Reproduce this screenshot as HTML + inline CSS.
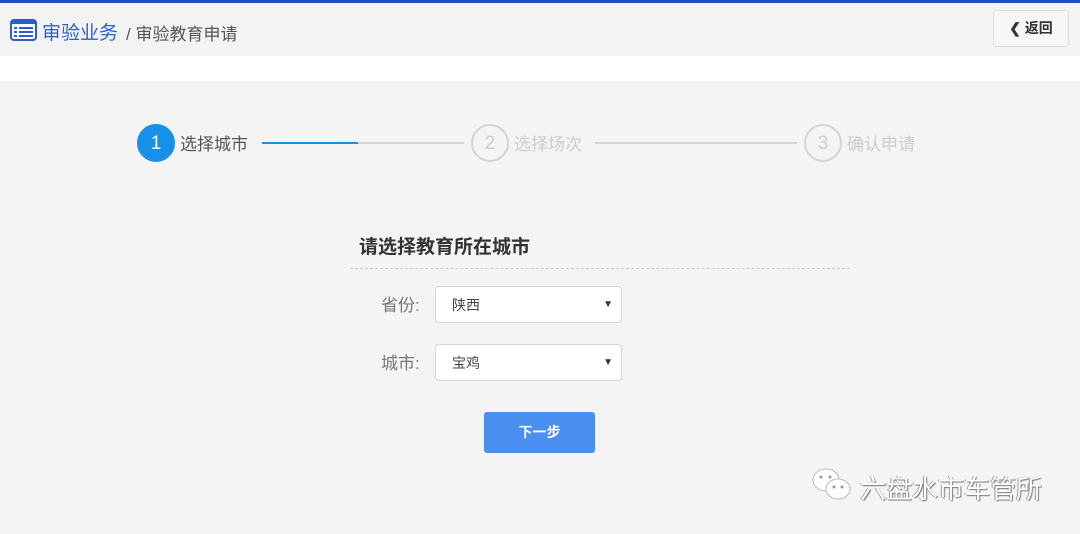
<!DOCTYPE html>
<html><head><meta charset="utf-8"><style>
*{margin:0;padding:0;box-sizing:border-box}
body{width:1080px;height:534px;overflow:hidden;background:#f4f4f4;font-family:"Liberation Sans","Noto Sans CJK SC",sans-serif;position:relative}
.top{position:absolute;left:0;top:0;width:1080px;height:3px;background:#1d4fc4}
.hdr{position:absolute;left:0;top:3px;width:1080px;height:53px;background:#f3f3f3}
.white{position:absolute;left:0;top:56px;width:1080px;height:25px;background:#fff}
.a{position:absolute;white-space:nowrap}
.back{position:absolute;left:993px;top:10px;width:76px;height:37px;border:1px solid #ddd;border-radius:3px;background:#f6f6f6;font-size:14px;color:#333;text-align:center;line-height:35px;font-weight:bold}
.circ{position:absolute;width:38px;height:38px;border-radius:50%;border:2px solid #d8d2d2;color:#ccc;font-size:19px;text-align:center;line-height:36px}
.line{position:absolute;height:2px;background:#d8d2d2;top:142px}
.sel{position:absolute;left:435px;width:187px;height:37px;border:1px solid #d6d6d6;border-radius:4px;background:#fff;font-size:14px;color:#444;padding-left:16px;line-height:37px}
.sel:after{content:"▼";position:absolute;right:8px;top:0;font-size:10px;color:#333;line-height:35px}
.lbl{position:absolute;font-size:17px;color:#777}
</style></head><body>
<div class="top"></div><div class="hdr"></div><div class="white"></div>
<svg class="a" style="left:10px;top:19px" width="27" height="22" viewBox="0 0 27 22"><rect x="1" y="1" width="25" height="20" rx="3" fill="#fff" stroke="#2a5bd0" stroke-width="2"/><rect x="1" y="1" width="25" height="4" fill="#2a5bd0"/><g fill="#2a5bd0"><rect x="4" y="8" width="3" height="2"/><rect x="9" y="8" width="14" height="2"/><rect x="4" y="12" width="3" height="2"/><rect x="9" y="12" width="14" height="2"/><rect x="4" y="16" width="3" height="2"/><rect x="9" y="16" width="14" height="2"/></g></svg>
<div class="a" style="left:42px;top:18px;font-size:19px;color:#2c5fd4">审验业务</div>
<div class="a" style="left:126px;top:20px;font-size:17px;color:#555">/ 审验教育申请</div>
<div class="back">❮ 返回</div>

<div class="circ" style="left:137px;top:124px;background:#1890e8;border-color:#1890e8;color:#fff">1</div>
<div class="a" style="left:180px;top:130px;font-size:17px;color:#555">选择城市</div>
<div class="line" style="left:262px;width:202px"></div>
<div class="line" style="left:262px;width:96px;background:#1890e8"></div>
<div class="circ" style="left:471px;top:124px">2</div>
<div class="a" style="left:514px;top:130px;font-size:17px;color:#ccc">选择场次</div>
<div class="line" style="left:595px;width:202px"></div>
<div class="circ" style="left:804px;top:124px">3</div>
<div class="a" style="left:847px;top:130px;font-size:17px;color:#ccc">确认申请</div>

<div class="a" style="left:359px;top:232px;font-size:19px;font-weight:bold;color:#333">请选择教育所在城市</div>
<div class="a" style="left:350px;top:268px;width:500px;border-top:1px dashed #ccc"></div>
<div class="lbl" style="left:381px;top:291px">省份:</div>
<div class="sel" style="top:286px">陕西</div>
<div class="lbl" style="left:381px;top:349px">城市:</div>
<div class="sel" style="top:344px">宝鸡</div>
<div class="a" style="left:484px;top:412px;width:111px;height:41px;background:#4a8ff0;border-radius:3px;color:#fff;font-size:14px;font-weight:bold;text-align:center;line-height:41px">下一步</div>

<svg class="a" style="left:810px;top:466px" width="46" height="38" viewBox="0 0 46 38"><ellipse cx="16" cy="14" rx="13" ry="11" fill="#fff" stroke="#bbb"/><ellipse cx="28" cy="23" rx="12" ry="10" fill="#fff" stroke="#bbb"/><circle cx="11" cy="11" r="1.5" fill="#999"/><circle cx="20" cy="11" r="1.5" fill="#999"/><circle cx="24" cy="21" r="1.5" fill="#999"/><circle cx="32" cy="21" r="1.5" fill="#999"/></svg>
<div class="a" style="left:860px;top:469px;font-size:26px;color:#fff;text-shadow:1px 1px 1px #777,-1px 0 0 #999">六盘水市车管所</div>
</body></html>
